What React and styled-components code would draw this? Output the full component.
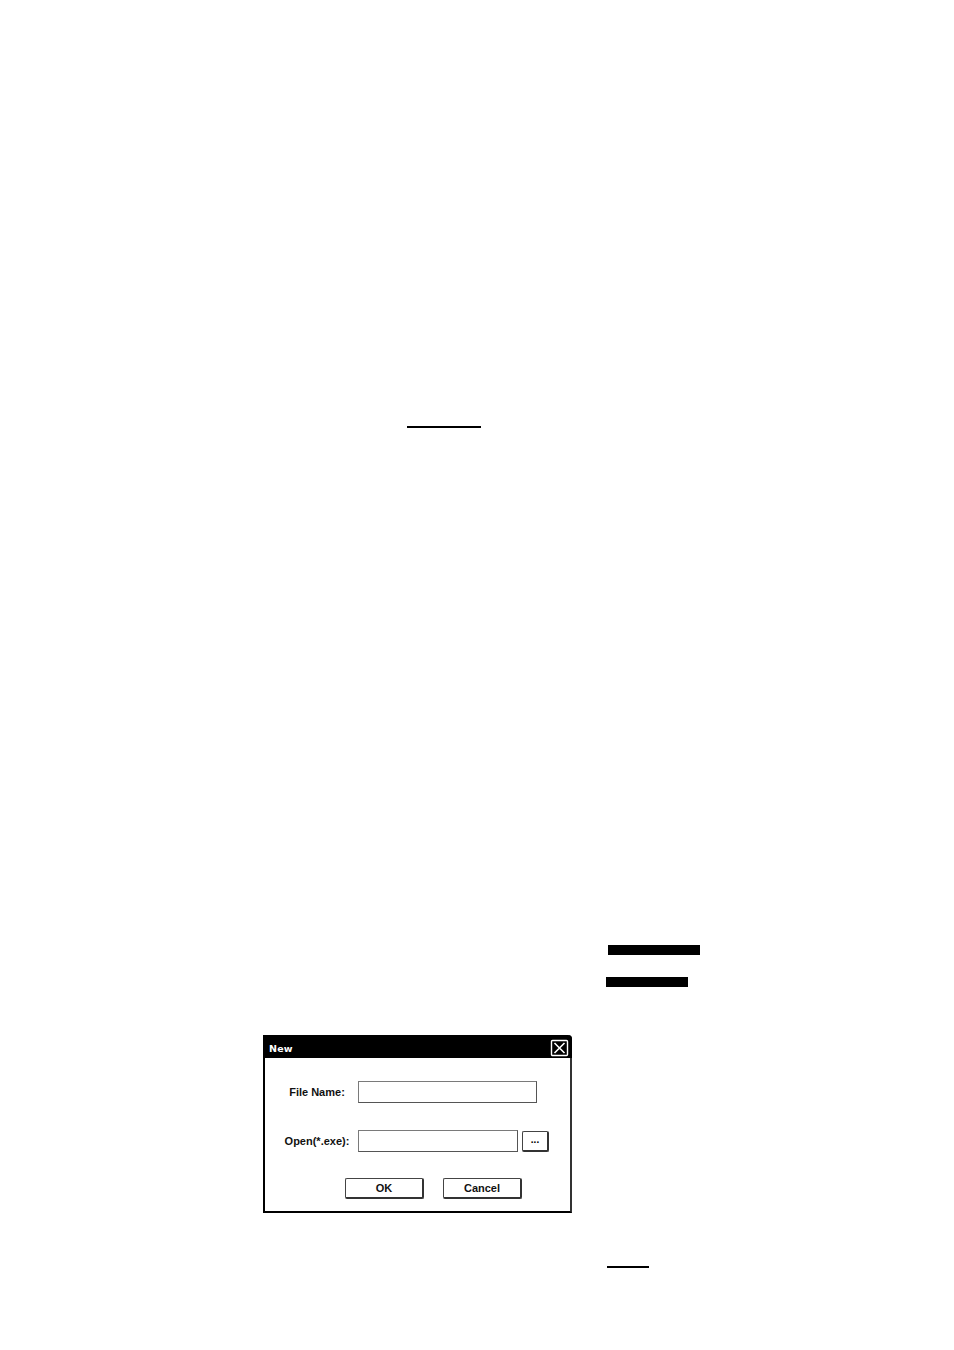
import React from "react";
import styled, { createGlobalStyle } from "styled-components";

const Global = createGlobalStyle`
  html, body {
    margin: 0;
    padding: 0;
    background: #ffffff;
  }
  body {
    font-family: "Liberation Sans", Arial, sans-serif;
  }
`;

export default function App() {
  return (
    <>
      <Global />
      <Page>
        <Rule $left={407} $width={74} />
        <Bar $top={517} $left={608} $width={92} />
        <Bar $top={22} $left={606} $width={82} />
        <Dialog>
          <TitleBar>
            <Title>New</Title>
            <CloseButton aria-label="close">
              <svg width="19" height="18" viewBox="0 0 19 18">
                <rect x="1.5" y="1.5" width="16" height="15" rx="1" fill="none" stroke="#fff" strokeWidth="1.4" />
                <path d="M4.5 4 L14.5 14 M14.5 4 L4.5 14" stroke="#fff" strokeWidth="1.6" />
              </svg>
            </CloseButton>
          </TitleBar>
          <Body>
            <FieldRow>
              <Label>File Name:</Label>
              <Input $width={179} />
            </FieldRow>
            <FieldRow>
              <Label>Open(*.exe):</Label>
              <Input $width={160} />
              <BrowseButton>...</BrowseButton>
            </FieldRow>
            <ButtonRow>
              <Button>OK</Button>
              <Button>Cancel</Button>
            </ButtonRow>
          </Body>
        </Dialog>
        <Rule $top={53} $left={607} $width={42} />
      </Page>
    </>
  );
}

const Page = styled.div`
  width: 954px;
  height: 1350px;
  padding-top: 426px;
  box-sizing: border-box;
  overflow: hidden;
`;

const Rule = styled.div`
  margin-top: ${(p) => p.$top || 0}px;
  margin-left: ${(p) => p.$left}px;
  width: ${(p) => p.$width}px;
  height: 2px;
  background: #000;
`;

const Bar = styled.div`
  margin-top: ${(p) => p.$top}px;
  margin-left: ${(p) => p.$left}px;
  width: ${(p) => p.$width}px;
  height: 10px;
  background: #000;
`;

const Dialog = styled.div`
  margin-top: 48px;
  margin-left: 263px;
  width: 309px;
  height: 178px;
  box-sizing: border-box;
  border: 2px solid #000;
  border-top: none;
  border-right-color: #333;
  border-top-right-radius: 4px;
  background: #fff;
  display: flex;
  flex-direction: column;
`;

const TitleBar = styled.div`
  height: 23px;
  margin: 0 -2px;
  background: #000;
  border-top-right-radius: 4px;
  display: flex;
  align-items: center;
  justify-content: space-between;
  padding: 0 3px 0 6px;
`;

const Title = styled.span`
  color: #fff;
  font-family: "DejaVu Sans", "Liberation Sans", sans-serif;
  font-weight: bold;
  font-size: 9.5px;
  letter-spacing: 0.2px;
  margin-top: 3px;
`;

const CloseButton = styled.div`
  width: 19px;
  height: 18px;
  display: flex;
  margin-top: 2px;
`;

const Body = styled.div`
  display: flex;
  flex-direction: column;
  padding-top: 23px;
`;

const FieldRow = styled.div`
  display: flex;
  align-items: center;
  height: 22px;
  margin-bottom: 27px;
`;

const Label = styled.span`
  width: 82px;
  margin-left: 11px;
  text-align: center;
  font-weight: bold;
  font-size: 11px;
  color: #111;
`;

const Input = styled.div`
  width: ${(p) => p.$width}px;
  height: 22px;
  box-sizing: border-box;
  border: 1px solid #7a7a7a;
  border-right-color: #555;
  border-bottom-color: #555;
  background: #fff;
`;

const BrowseButton = styled.div`
  width: 27px;
  height: 21px;
  margin-left: 4px;
  box-sizing: border-box;
  border: 1px solid #444;
  border-right: 2px solid #333;
  border-bottom: 2px solid #333;
  border-radius: 2px;
  display: flex;
  align-items: center;
  justify-content: center;
  font-size: 10px;
  font-weight: bold;
  line-height: 1;
  padding-bottom: 2px;
`;

const ButtonRow = styled.div`
  display: flex;
  gap: 19px;
  margin-left: 80px;
  margin-top: -1px;
`;

const Button = styled.div`
  width: 79px;
  height: 21px;
  box-sizing: border-box;
  border: 1px solid #444;
  border-right: 2px solid #333;
  border-bottom: 2px solid #333;
  border-radius: 2px;
  display: flex;
  align-items: center;
  justify-content: center;
  font-size: 11px;
  font-weight: bold;
  color: #111;
`;
